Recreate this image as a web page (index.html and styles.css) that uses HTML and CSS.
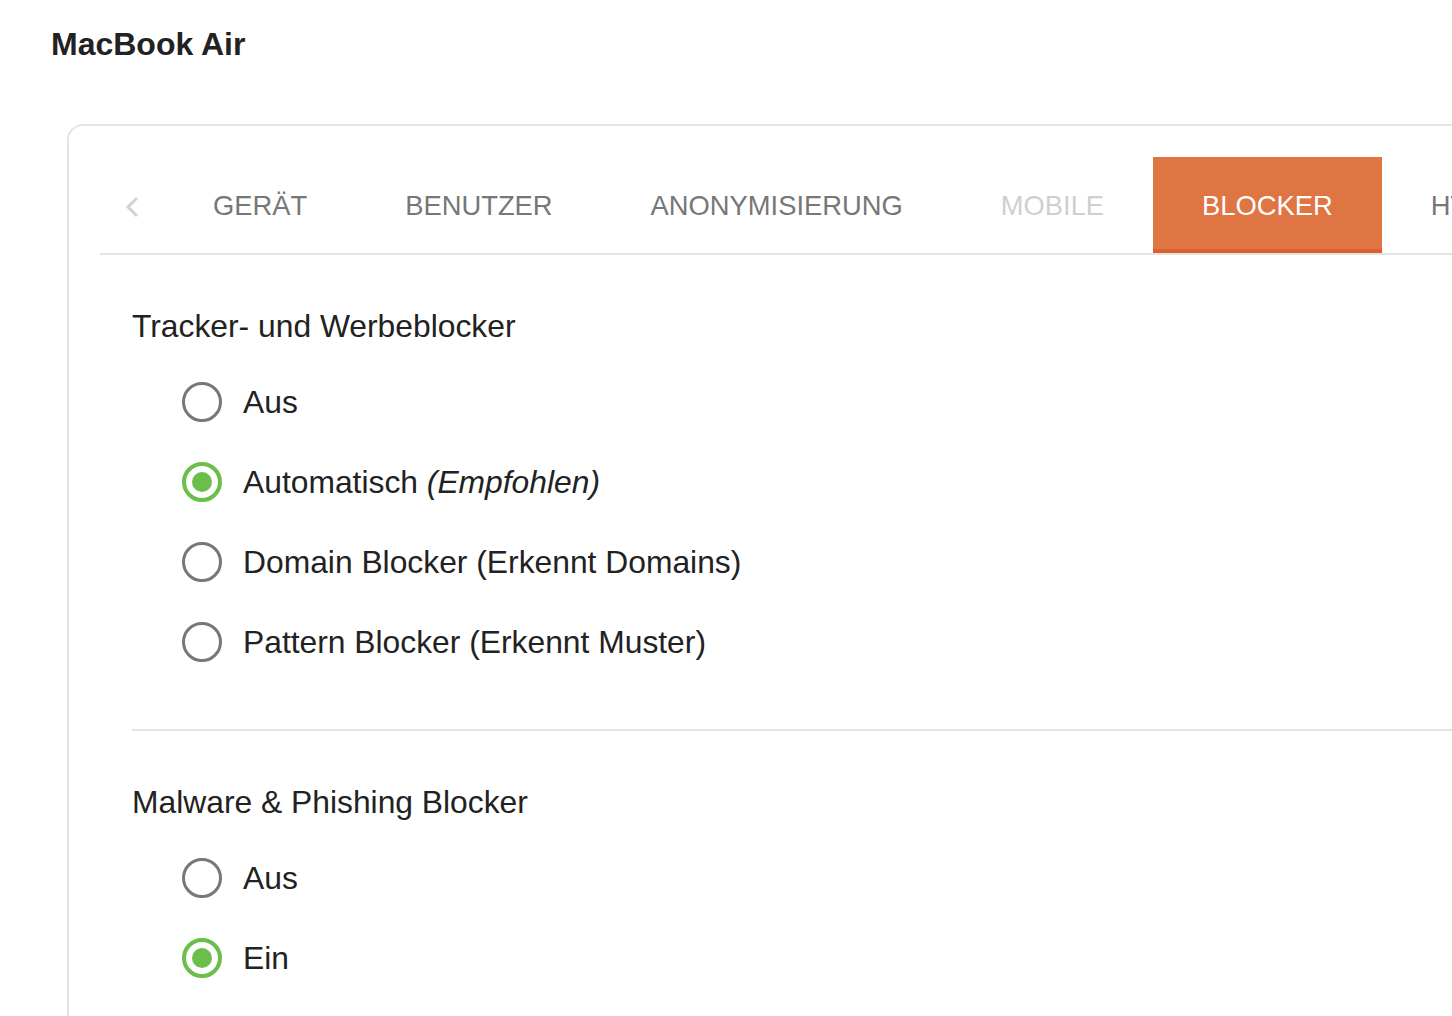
FILE: index.html
```html
<!DOCTYPE html>
<html lang="de">
    <head>
        <meta charset="UTF-8" />
        <meta name="viewport" content="width=device-width, initial-scale=1.0" />
        <title>MacBook Air</title>
        <link rel="stylesheet" href="styles.css">
    </head>
    <body>
        <h1 class="device-title">MacBook Air</h1>

        <div class="card">
            <div class="tabs">
                <span class="tab-prev">
                    <svg width="14" height="22" viewBox="0 0 14 22">
                        <polyline points="12,2 3,11 12,20" fill="none" stroke="#d2d2d2" stroke-width="3" />
                    </svg>
                </span>
                <a class="tab" href="#">GERÄT</a>
                <a class="tab" href="#">BENUTZER</a>
                <a class="tab" href="#">ANONYMISIERUNG</a>
                <a class="tab tab-disabled" href="#">MOBILE</a>
                <a class="tab tab-active" href="#">BLOCKER</a>
                <a class="tab" href="#">HTTPS</a>
            </div>

            <div class="section">
                <h3 class="section-title">Tracker- und Werbeblocker</h3>
                <label class="option">
                    <span class="radio"></span>
                    <span>Aus</span>
                </label>
                <label class="option">
                    <span class="radio checked"></span>
                    <span>Automatisch <em>(Empfohlen)</em></span>
                </label>
                <label class="option">
                    <span class="radio"></span>
                    <span>Domain Blocker (Erkennt Domains)</span>
                </label>
                <label class="option">
                    <span class="radio"></span>
                    <span>Pattern Blocker (Erkennt Muster)</span>
                </label>
            </div>

            <div class="section">
                <h3 class="section-title">Malware &amp; Phishing Blocker</h3>
                <label class="option">
                    <span class="radio"></span>
                    <span>Aus</span>
                </label>
                <label class="option">
                    <span class="radio checked"></span>
                    <span>Ein</span>
                </label>
            </div>
        </div>
    </body>
</html>
```

FILE: styles.css
```css
* {
    box-sizing: border-box;
}

body {
    margin: 0;
    overflow: hidden;
    color: #222;
    font-family: "Liberation Sans", Arial, Helvetica, sans-serif;
    background: #fff;
}

.device-title {
    margin: 26px 0 62px 51px;
    font-size: 32px;
    line-height: 36px;
    font-weight: bold;
    color: #222;
}

.card {
    margin: 0 -60px 0 67px;
    padding: 31px 0 0 31px;
    border: 2px solid #e4e4e4;
    border-radius: 16px;
    overflow: hidden;
}

.tabs {
    display: flex;
    flex-wrap: nowrap;
    border-bottom: 2px solid #e3e3e3;
    white-space: nowrap;
}

.tab-prev {
    display: flex;
    align-items: center;
    flex-shrink: 0;
    width: 64px;
    height: 96px;
    padding: 4px 0 0 25px;
}

.tab {
    display: block;
    flex-shrink: 0;
    height: 96px;
    padding: 5px 49px 0;
    border-bottom: 4px solid transparent;
    font-size: 27.35px;
    line-height: 87px;
    color: #777;
    text-decoration: none;
}

.tab-disabled {
    color: #cfcfcf;
}

.tab-active {
    color: #fff;
    background-color: #de7543;
    border-bottom-color: #d9622b;
}

.section {
    margin-left: 32px;
    padding: 51px 0 47px;
}

.section + .section {
    border-top: 2px solid #e3e3e3;
}

.section-title {
    margin: 0 0 16px;
    font-size: 31.8px;
    line-height: 40px;
    font-weight: normal;
}

.option {
    display: flex;
    align-items: center;
    height: 80px;
    padding-left: 50px;
    font-size: 31.8px;
    cursor: pointer;
}

.option em {
    font-style: italic;
}

.radio {
    display: flex;
    align-items: center;
    justify-content: center;
    width: 40px;
    height: 40px;
    margin-right: 21px;
    border: 3px solid #777;
    border-radius: 50%;
    flex-shrink: 0;
}

.radio.checked {
    border: 4px solid #6abf4b;
}

.radio.checked::after {
    content: "";
    width: 20px;
    height: 20px;
    border-radius: 50%;
    background-color: #6abf4b;
}
```
